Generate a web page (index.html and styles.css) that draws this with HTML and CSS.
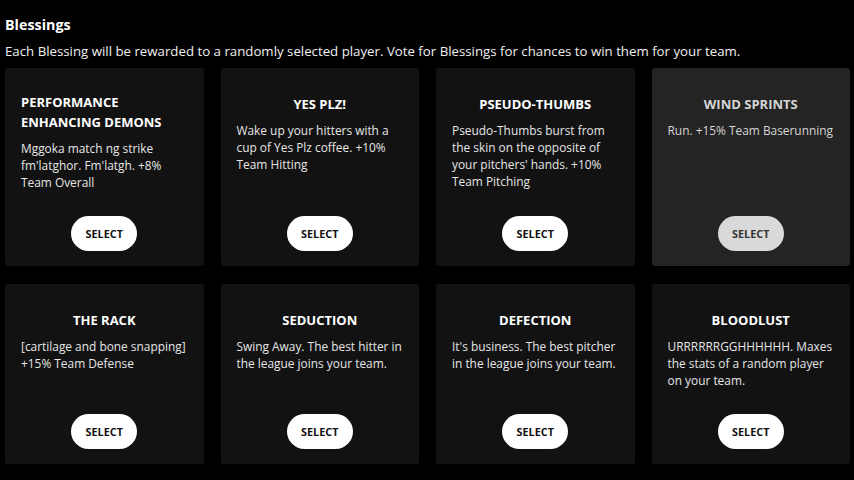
FILE: index.html
```html
<!DOCTYPE html>
<html>
<head>
<meta charset="utf-8">
<link rel="stylesheet" href="styles.css">
</head>
<body>
<main class="page">
  <h1 class="heading">Blessings</h1>
  <p class="intro">Each Blessing will be rewarded to a randomly selected player. Vote for Blessings for chances to win them for your team.</p>
  <div class="grid">
    <div class="card">
      <div class="card-head"><h2 class="title">Performance Enhancing Demons</h2></div>
      <p class="desc">Mggoka match ng strike fm'latghor. Fm'latgh. +8% Team Overall</p>
      <button class="select">Select</button>
    </div>
    <div class="card">
      <div class="card-head"><h2 class="title">Yes Plz!</h2></div>
      <p class="desc">Wake up your hitters with a cup of Yes Plz coffee. +10% Team Hitting</p>
      <button class="select">Select</button>
    </div>
    <div class="card">
      <div class="card-head"><h2 class="title">Pseudo-Thumbs</h2></div>
      <p class="desc">Pseudo-Thumbs burst from the skin on the opposite of your pitchers' hands. +10% Team Pitching</p>
      <button class="select">Select</button>
    </div>
    <div class="card card-active">
      <div class="card-head"><h2 class="title">Wind Sprints</h2></div>
      <p class="desc">Run. +15% Team Baserunning</p>
      <button class="select">Select</button>
    </div>
    <div class="card">
      <div class="card-head"><h2 class="title">The Rack</h2></div>
      <p class="desc">[cartilage and bone snapping] +15% Team Defense</p>
      <button class="select">Select</button>
    </div>
    <div class="card">
      <div class="card-head"><h2 class="title">Seduction</h2></div>
      <p class="desc">Swing Away. The best hitter in the league joins your team.</p>
      <button class="select">Select</button>
    </div>
    <div class="card">
      <div class="card-head"><h2 class="title">Defection</h2></div>
      <p class="desc">It's business. The best pitcher in the league joins your team.</p>
      <button class="select">Select</button>
    </div>
    <div class="card">
      <div class="card-head"><h2 class="title">Bloodlust</h2></div>
      <p class="desc">URRRRRRGGHHHHHH. Maxes the stats of a random player on your team.</p>
      <button class="select">Select</button>
    </div>
  </div>
</main>
</body>
</html>
```
FILE: styles.css
```css
html, body {
  margin: 0;
  padding: 0;
  background: #000;
}
body {
  font-family: "Open Sans", "DejaVu Sans", sans-serif;
  color: #fff;
}
.page {
  padding: 15px 4px 0 5px;
}
.heading {
  margin: 0;
  font-size: 14.3px;
  line-height: 20px;
  font-weight: 700;
  color: #fff;
}
.intro {
  margin: 7px 0 8px;
  font-size: 13.25px;
  line-height: 18px;
  color: #f0f0f0;
}
.grid {
  display: grid;
  grid-template-columns: repeat(4, 1fr);
  column-gap: 17px;
  row-gap: 18px;
}
.card {
  background: #121212;
  border-radius: 3px;
  padding: 24px 16px 15px;
  display: flex;
  flex-direction: column;
}
.card-active {
  background: #242424;
}
.card-head {
  text-align: center;
}
.title {
  display: inline-block;
  text-align: left;
  margin: 0 0 8px;
  font-size: 13px;
  line-height: 20px;
  font-weight: 700;
  text-transform: uppercase;
  color: #fff;
}
.desc {
  flex: 1 0 auto;
  margin: 0 -3px 25px 0;
  font-size: 11.9px;
  line-height: 17px;
  color: #e6e6e6;
}
.select {
  align-self: center;
  width: 66px;
  height: 35px;
  margin: 0;
  border: none;
  border-radius: 18px;
  background: #fff;
  color: #111;
  font-family: "Open Sans", "DejaVu Sans", sans-serif;
  font-size: 10.8px;
  font-weight: 700;
  text-transform: uppercase;
  padding: 0;
  cursor: pointer;
}
.card-active .title {
  color: #d6d6d6;
}
.card-active .desc {
  color: #d6d6d6;
}
.card-active .select {
  background: #d9d9d9;
  color: #333;
}
```
